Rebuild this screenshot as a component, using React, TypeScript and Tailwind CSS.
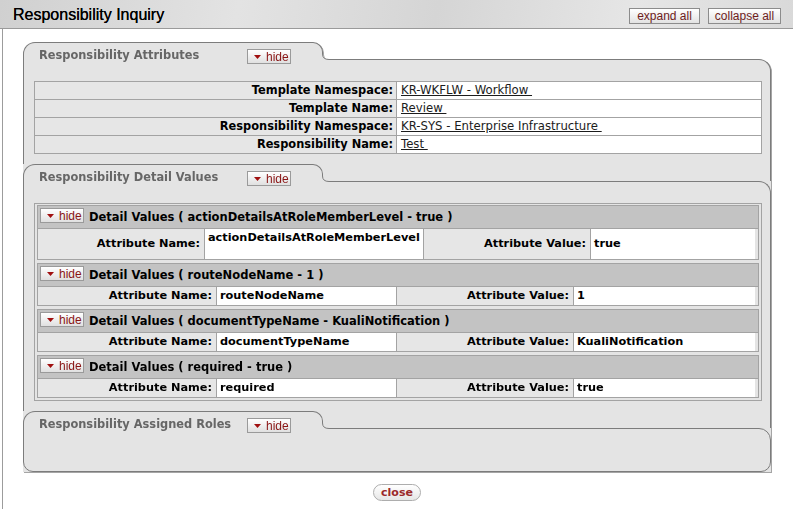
import type { ReactNode } from "react";

const attributes = [
  { label: "Template Namespace:", value: "KR-WKFLW - Workflow " },
  { label: "Template Name:", value: "Review " },
  { label: "Responsibility Namespace:", value: "KR-SYS - Enterprise Infrastructure " },
  { label: "Responsibility Name:", value: "Test " },
];

const details = [
  { name: "actionDetailsAtRoleMemberLevel", value: "true", tall: true },
  { name: "routeNodeName", value: "1", tall: false },
  { name: "documentTypeName", value: "KualiNotification", tall: false },
  { name: "required", value: "true", tall: false },
];

const HideButton = () => (
  <button className="flex h-[15px] w-[44px] shrink-0 items-center gap-[5px] border border-[#9a9a9a] bg-[linear-gradient(#ffffff,#e0e0e0)] pl-[6px] font-['Liberation_Sans',Arial,sans-serif] text-[12px] leading-none text-[#8a1515]">
    <svg width="7" height="4" viewBox="0 0 7 4">
      <path d="M0 0H7L3.5 4Z" fill="#a01010" />
    </svg>
    hide
  </button>
);

interface SectionProps {
  title: string;
  first?: boolean;
  last?: boolean;
  children?: ReactNode;
}

const Section = ({ title, first, last, children }: SectionProps) => (
  <div className={first ? "flex flex-col" : "flex flex-col bg-[#e4e4e4]"}>
    {/* tab row */}
    <div className="flex h-[17px] items-start">
      <div className="relative z-10 flex h-[18px] w-[300px] shrink-0 items-start rounded-tl-[12px] rounded-tr-[10px] border-l border-r border-t border-[#7c7c7c] bg-[#e4e4e4] pl-[15px] pt-[6px]">
        <span className="w-[208px] text-[11.4px] font-bold leading-[12px] text-[#666666]">{title}</span>
        <HideButton />
      </div>
      {/* flared foot of the tab */}
      <svg className="relative z-20 -mb-px -ml-px shrink-0 self-end" width="8" height="7" viewBox="0 0 8 7">
        <path d="M0 0H1V1Q1 6 7 6H8V7H0Z" fill="#e4e4e4" />
        <path d="M0.5 0V1Q0.5 6.5 7 6.5H8" fill="none" stroke="#7c7c7c" strokeWidth="1" />
      </svg>
      <div className={first ? "h-full flex-1" : "h-full flex-1 border-r border-[#7c7c7c]"} />
    </div>
    <div
      className={
        last
          ? "h-[44px] rounded-b-[10px] rounded-tr-[12px] border border-[#7c7c7c] bg-[#e4e4e4]"
          : "rounded-tr-[12px] border-l border-r border-t border-[#7c7c7c] bg-[#e4e4e4] pb-[10px] pl-[10px] pr-[8px] pt-[21px]"
      }
    >
      {children}
    </div>
  </div>
);

const DetailBlock = ({ name, value, tall }: { name: string; value: string; tall: boolean }) => {
  const w = tall
    ? ["w-[167px]", "w-[219px]", "w-[167px]", "w-[164px]"]
    : ["w-[179px]", "w-[180px]", "w-[177px]", "w-[181px]"];
  return (
    <div className="flex flex-col border border-[#a3a3a3]">
      <div className="flex h-[22px] items-start bg-[#c3c3c3] pl-[2px]">
        <div className="mt-[2px]">
          <HideButton />
        </div>
        <span className="ml-[5px] mt-[4px] text-[11.5px] font-bold leading-[14px] text-black">
          Detail Values ( {name} - {value} )
        </span>
      </div>
      <div className={`flex border-t border-[#a3a3a3] text-[11.3px] font-bold text-black ${tall ? "h-[31px]" : "h-[19px]"}`}>
        <div className={`${w[0]} flex items-center justify-end border-r border-[#a3a3a3] bg-[#e6e6e6] pr-[4px]`}>
          Attribute Name:
        </div>
        <div className={`${w[1]} flex border-r border-[#a3a3a3] bg-white pl-[3px] ${tall ? "items-start pt-[1px]" : "items-center"}`}>
          {name}
        </div>
        <div className={`${w[2]} flex items-center justify-end border-r border-[#a3a3a3] bg-[#e6e6e6] pr-[4px]`}>
          Attribute Value:
        </div>
        <div className={`${w[3]} flex items-center bg-white pl-[3px]`}>{value}</div>
      </div>
    </div>
  );
};

export default function App() {
  return (
    <div className="flex h-[509px] w-[793px] flex-col overflow-hidden bg-white font-['DejaVu_Sans',Verdana,sans-serif]">
      <header className="flex h-[29px] shrink-0 items-start justify-between border-b border-[#9a9a9a] bg-[linear-gradient(100deg,#d0d0d0_0%,#e3e3e3_30%,#d5d5d5_55%,#e6e6e6_80%,#d9d9d9_100%)] pl-[13px] pr-[12px]">
        <h1 className="mt-[5px] font-['Liberation_Sans',Arial,sans-serif] text-[16px] leading-[20px] text-black [text-shadow:0_0_0.5px_#000]">
          Responsibility Inquiry
        </h1>
        <div className="mt-[8px] flex gap-[8px] font-['Liberation_Sans',Arial,sans-serif] text-[12px] leading-none text-[#6e1c1c]">
          <button className="h-[16px] w-[71px] border border-[#8c8c8c] bg-[linear-gradient(#ffffff,#e2e2e2)]">expand all</button>
          <button className="h-[16px] w-[73px] border border-[#8c8c8c] bg-[linear-gradient(#ffffff,#e2e2e2)]">collapse all</button>
        </div>
      </header>

      <div className="ml-[2px] flex flex-1 flex-col border-l border-[#9c9c9c] pl-[20px] pr-[22px] pt-[13px]">
        <div className="flex flex-col [filter:drop-shadow(1px_1px_0_#a5a5a5)]">
          <Section title="Responsibility Attributes" first>
            <div className="flex flex-col border-l border-r border-t border-[#a3a3a3]">
              {attributes.map((a) => (
                <div key={a.label} className="flex h-[18px] border-b border-[#a3a3a3]">
                  <div className="flex w-[362px] items-center justify-end border-r border-[#a3a3a3] bg-[#e6e6e6] pr-[3px] text-[11.4px] font-bold text-black">
                    {a.label}
                  </div>
                  <div className="flex flex-1 items-center bg-white pl-[4px] text-[11.7px]">
                    <a className="whitespace-pre text-[#1c1c1c] underline">{a.value}</a>
                  </div>
                </div>
              ))}
            </div>
          </Section>

          <Section title="Responsibility Detail Values">
            <div className="flex flex-col gap-[3px] border border-[#a3a3a3] px-[2px] pb-[2px] pt-[1px]">
              {details.map((d) => (
                <DetailBlock key={d.name} {...d} />
              ))}
            </div>
          </Section>

          <Section title="Responsibility Assigned Roles" last />
        </div>

        <div className="mt-[12px] flex justify-center">
          <button className="h-[17px] w-[48px] rounded-full border border-[#adadad] bg-[linear-gradient(#ffffff,#e6e6e6)] text-[11px] font-bold leading-none text-[#9b2a2a]">
            close
          </button>
        </div>
      </div>
    </div>
  );
}
